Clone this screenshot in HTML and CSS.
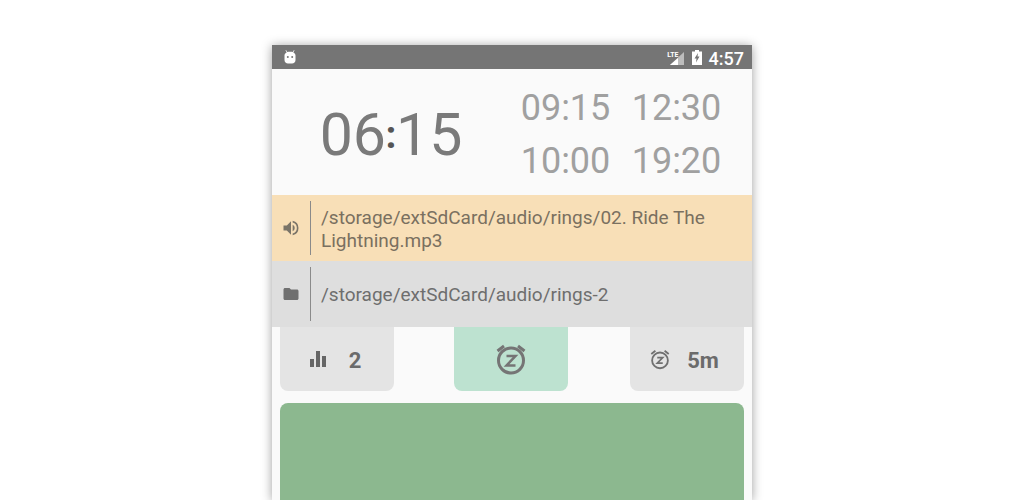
FILE: index.html
```html
<!DOCTYPE html>
<html lang="en">
<head>
<meta charset="utf-8">
<title>Alarm</title>
<link rel="stylesheet" href="styles.css">
</head>
<body>
<main class="phone">
  <header class="status">
    <svg class="ic-android" viewBox="0 0 16 16" width="16" height="16"><path fill="#fff" d="M4 1l1.300 2.100C6 2.800 7 2.700 8 2.700s2 .1 2.700.4L12 1l.5.3-1.200 2.100c1.300.6 2.200 1.700 2.200 3.100v4.500c0 2-1.500 3.500-3.500 3.500H6c-2 0-3.500-1.500-3.500-3.500V6.500c0-1.400.9-2.500 2.200-3.100L3.500 1.300z"/><circle cx="5.800" cy="8" r="1" fill="#757575"/><circle cx="10.200" cy="8" r="1" fill="#757575"/></svg>
    <div class="status-right">
      <span class="lte">LTE</span>
      <svg class="ic-signal" viewBox="0 0 14 13" width="14" height="13"><path fill="#bdbdbd" d="M14 0v13H0z"/><path fill="#fff" d="M8 6v7H0z"/></svg>
      <svg class="ic-batt" viewBox="0 0 10 15" width="10" height="15"><path fill="#fff" d="M3 0h4v1.500h3V15H0V1.500h3z"/><path fill="#757575" d="M6 3L2.500 8.500h2L4 12.500 7.500 6.500h-2z"/></svg>
      <span class="clock">4:57</span>
    </div>
  </header>

  <section class="times">
    <div class="now">06<span class="colon">:</span>15</div>
    <div class="others">
      <span>09:15</span><span>12:30</span>
      <span>10:00</span><span>19:20</span>
    </div>
  </section>

  <section class="row row-sound">
    <div class="row-icon">
      <svg viewBox="0 0 24 24" width="20" height="20"><path fill="#7a7468" d="M3 9v6h4l5 5V4L7 9zm13.500 3A4.500 4.500 0 0 0 14 7.970v8.050A4.470 4.470 0 0 0 16.500 12zM14 3.230v2.060a7 7 0 0 1 0 13.420v2.060a9 9 0 0 0 0-17.540z"/></svg>
    </div>
    <p class="row-text">/storage/extSdCard/audio/rings/02. Ride The Lightning.mp3</p>
  </section>
  <section class="row row-folder">
    <div class="row-icon">
      <svg viewBox="0 0 24 24" width="18" height="18"><path fill="#707070" d="M10 4H4c-1.100 0-2 .9-2 2v12c0 1.100.9 2 2 2h16c1.100 0 2-.9 2-2V8c0-1.100-.9-2-2-2h-8z"/></svg>
    </div>
    <p class="row-text">/storage/extSdCard/audio/rings-2</p>
  </section>

  <section class="buttons">
    <div class="btn btn-bars">
      <svg viewBox="0 0 16 16" width="16" height="16"><path fill="#666" d="M0 8h4v8H0zM6 0h4v16H6zM12 5h4v11h-4z"/></svg>
      <span class="btn-label">2</span>
    </div>
    <div class="btn btn-main">
      <svg viewBox="0 0 32 32" width="32" height="32"><g fill="none" stroke="#757575" stroke-width="3"><circle cx="16" cy="17.500" r="12.500"/><path d="M2.500 8L9 3M29.500 8L23 3"/></g><path fill="none" stroke="#757575" stroke-width="2.500" d="M11.500 13h9l-9 9.500h9"/></svg>
    </div>
    <div class="btn btn-snooze">
      <svg viewBox="0 0 24 24" width="22" height="22"><g fill="none" stroke="#707070" stroke-width="2"><circle cx="12" cy="13.500" r="8.600"/><path d="M2.500 6.500L7 3M21.500 6.500L17 3"/><path stroke-width="1.800" d="M9 10.500h6l-6 6h6"/></g></svg>
      <span class="btn-label">5m</span>
    </div>
  </section>

  <section class="big"></section>
</main>
</body>
</html>
```

FILE: styles.css
```css
html, body {
  margin: 0;
  height: 500px;
  overflow: hidden;
  background: #fff;
}
body {
  display: flex;
  justify-content: center;
  padding-top: 45px;
  box-sizing: border-box;
  font-family: Roboto, sans-serif;
}
.phone {
  width: 480px;
  height: 455px;
  flex: none;
  background: #fafafa;
  box-shadow: 0 1px 10px rgba(0, 0, 0, .38);
}
.status {
  height: 24px;
  background: #757575;
  display: flex;
  align-items: center;
  justify-content: space-between;
  padding: 0 8px 0 10px;
}
.status-right {
  display: flex;
  align-items: center;
}
.lte {
  font-size: 7px;
  font-weight: 700;
  color: #fff;
  align-self: flex-start;
  margin: 4px -9px 0 0;
}
.ic-signal { margin-top: 2px; }
.ic-batt { margin: 0 0 0 8px; }
.clock {
  margin-left: 7px;
  font-size: 18px;
  font-weight: 500;
  color: #fff;
  position: relative;
  top: 1px;
}
.times {
  height: 126px;
  display: flex;
  align-items: center;
  color: #7a7a7a;
}
.now {
  width: 240px;
  padding: 4px 0 0;
  box-sizing: border-box;
  text-align: center;
  font-size: 59px;
}
.colon {
  color: #555;
  font-size: 39px;
  font-weight: 700;
  position: relative;
  top: -7px;
  margin: 0 -.5px;
}
.others {
  flex: 1;
  display: grid;
  grid-template-columns: 111px 111px;
  justify-content: center;
  padding: 6px 20px 0 0;
  font-size: 36px;
  line-height: 53px;
  color: #a0a0a0;
  text-align: center;
}
.row {
  height: 66px;
  display: flex;
  align-items: center;
}
.row-sound { background: #f8dfb7; color: #7a7060; }
.row-sound .row-text { padding-top: 2px; }
.row-folder { background: #dedede; color: #6e6e6e; }
.row-icon {
  width: 39px;
  height: 54px;
  flex: none;
  box-sizing: border-box;
  border-right: 1px solid #8a8a8a;
  display: flex;
  align-items: center;
  justify-content: center;
}
.row-text {
  margin: 0;
  padding: 0 30px 0 10px;
  font-size: 19px;
  line-height: 23px;
}
.buttons {
  height: 64px;
  display: flex;
  padding: 0 8px;
}
.btn {
  width: 114px;
  background: #e4e4e4;
  border-radius: 0 0 8px 8px;
  display: flex;
  align-items: center;
  justify-content: center;
  gap: 16px;
  color: #6b6b6b;
}
.btn-bars { gap: 23px; padding-right: 3px; box-sizing: border-box; }
.btn-main { background: #bde2d0; margin-left: 60px; }
.btn-snooze { margin-left: auto; padding-right: 6px; box-sizing: border-box; }
.btn-label {
  font-size: 22px;
  font-weight: 700;
  margin-top: 2px;
}
.big {
  margin: 12px 8px 0;
  height: 200px;
  background: #8cb88f;
  border-radius: 8px 8px 0 0;
}
```
